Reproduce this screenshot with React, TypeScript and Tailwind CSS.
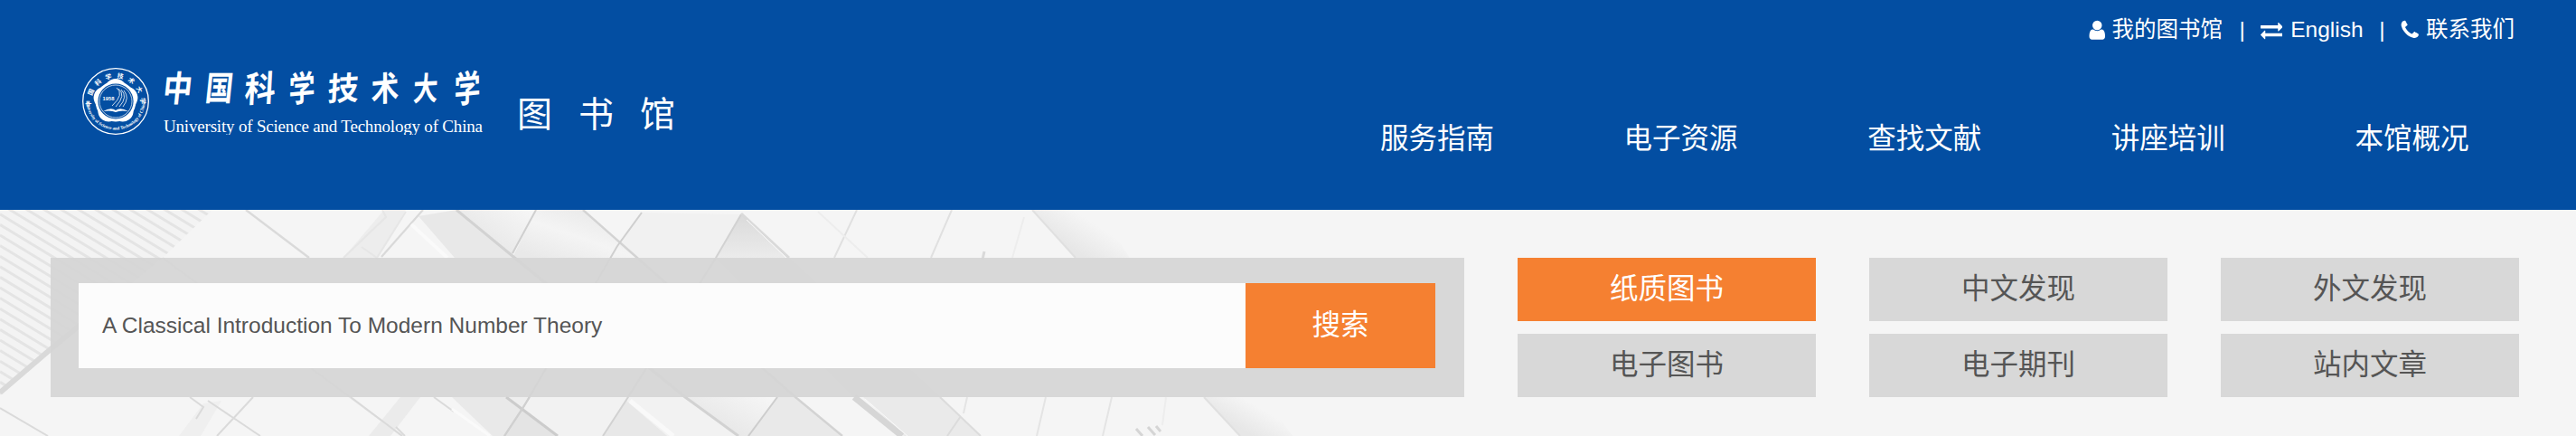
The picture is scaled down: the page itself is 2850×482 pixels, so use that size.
import React from "react";

const sans = "font-['Liberation_Sans','Noto_Sans_CJK_SC',sans-serif]";

const UserIcon = () => (
  <svg viewBox="0 0 1792 1792" className="h-[24.5px] w-[24.5px] -mx-[3px]" fill="currentColor">
    <path d="M1536 1399q0 109-62.5 187t-150.5 78h-854q-88 0-150.5-78t-62.5-187q0-85 8.5-160.5t31.5-152 58.5-131 94-89 134.5-34.5q131 128 313 128t313-128q76 0 134.5 34.5t94 89 58.5 131 31.5 152 8.5 160.5zm-256-887q0 159-112.5 271.5t-271.5 112.5-271.5-112.5-112.5-271.5 112.5-271.5 271.5-112.5 271.5 112.5 112.5 271.5z" />
  </svg>
);

const ExchangeIcon = () => (
  <svg viewBox="0 0 1792 1792" className="h-[24.5px] w-[24.5px]" fill="currentColor">
    <path d="M1792 1184v192q0 13-9.5 22.5t-22.5 9.5h-1376v192q0 13-9.5 22.5t-22.5 9.5q-12 0-24-10l-319-320q-9-9-9-22 0-14 9-23l320-320q9-9 23-9 13 0 22.5 9.5t9.5 22.5v192h1376q13 0 22.5 9.5t9.5 22.5zm0-544q0 14-9 23l-320 320q-9 9-23 9-13 0-22.5-9.5t-9.5-22.5v-192h-1376q-13 0-22.5-9.5t-9.5-22.5v-192q0-13 9.5-22.5t22.5-9.5h1376v-192q0-14 9-23t23-9q12 0 24 10l319 319q9 9 9 23z" />
  </svg>
);

const PhoneIcon = () => (
  <svg viewBox="0 0 1792 1792" className="h-[24.5px] w-[24.5px] -mx-[3px]" fill="currentColor">
    <path d="M1600 1240q0 27-10 70.5t-21 68.5q-21 50-122 106-94 51-186 51-27 0-53-3.5t-57.5-12.5-47-14.5-55.5-20.5-49-18q-98-35-175-83-127-79-264-216t-216-264q-48-77-83-175-3-9-18-49t-20.5-55.5-14.5-47-12.5-57.5-3.5-53q0-92 51-186 56-101 106-122 25-11 68.5-21t70.5-10q14 0 21 3 18 6 53 76 11 19 30 54t35 63.5 31 53.5q3 4 17.5 25t21.5 35.5 7 28.5q0 20-28.5 50t-62 55-62 53-28.5 46q0 9 5 22.5t8.5 20.5 14 24 11.5 19q76 137 174 235t235 174q2 1 19 11.5t24 14 20.5 8.5 22.5 5q18 0 46-28.5t53-62 55-62 50-28.5q14 0 28.5 7t35.5 21.5 25 17.5q25 15 53.5 31t63.5 35 54 30q70 35 76 53 3 7 3 21z" />
  </svg>
);

const Emblem = () => (
  <svg viewBox="-38 -38 76 76" className="h-[76px] w-[76px]" fill="#fff">
    <defs>
      <path id="arcTop" d="M-27 7 A27.5 27.5 0 1 1 27 7" />
      <path id="arcBottom" d="M-32.5 -1 A32.5 32.5 0 0 0 32.5 -1" />
    </defs>
    <circle r="36.3" fill="none" stroke="#fff" strokeWidth="1.3" />
    {[0, 72, 144, 216, 288].map((a) => (
      <circle key={a} r="12" cy="-13" transform={`rotate(${a})`} />
    ))}
    <circle r="22.5" />
    <circle r="19.6" fill="#034ea2" />
    <circle r="18" fill="none" stroke="#fff" strokeWidth="0.7" />
    <text className="font-['Liberation_Sans'] text-[5.8px] font-bold" x="-14.5" y="-1.5">1958</text>
    <path d="M-14 11 Q-5 6 0 10 Q5 6 14 11 Q5 9.5 0 12 Q-5 9.5 -14 11Z" />
    <path
      d="M3 -14 Q12 -7 0 6 M6 -13 Q14 -5 4 6 M9 -12 Q16 -4 8 6 M1 -15 Q10 -8 -4 5"
      fill="none"
      stroke="#fff"
      strokeWidth="0.8"
    />
    <text className="font-['Noto_Sans_CJK_SC'] text-[7px] font-bold">
      <textPath href="#arcTop" startOffset="1" textLength="92">中国科学技术大学</textPath>
    </text>
    <text className="font-['Liberation_Serif'] text-[5px] font-bold">
      <textPath href="#arcBottom" startOffset="2" textLength="98">
        University of Science and Technology of China
      </textPath>
    </text>
  </svg>
);

const Backdrop = () => (
  <svg
    viewBox="0 232 2850 250"
    preserveAspectRatio="none"
    className="absolute inset-0 h-full w-full"
    fill="none"
    stroke="#dadada"
    strokeWidth="2"
  >
    <defs>
      <clipPath id="stripeClip">
        <polygon points="0,232 235,232 180,285 56,388 0,437" />
      </clipPath>
      <linearGradient id="toDiagonal" x1="1" y1="0.1" x2="0" y2="0.9">
        <stop offset="0" stopColor="#f6f6f6" />
        <stop offset="1" stopColor="#e2e2e2" />
      </linearGradient>
      <linearGradient id="fromDiagonal" x1="0" y1="1" x2="0.9" y2="0">
        <stop offset="0.1" stopColor="#e9e9e9" />
        <stop offset="0.5" stopColor="#f4f4f4" />
        <stop offset="1" stopColor="#e6e6e6" />
      </linearGradient>
      <linearGradient id="soft" gradientUnits="objectBoundingBox" x1="0.25" y1="0.6" x2="0.65" y2="0.3">
        <stop offset="0" stopColor="#e7e7e7" />
        <stop offset="1" stopColor="#f5f5f5" />
      </linearGradient>
      <linearGradient id="triangle" x1="0" y1="0" x2="0" y2="1">
        <stop offset="0" stopColor="#dadada" />
        <stop offset="1" stopColor="#ebebeb" />
      </linearGradient>
    </defs>

    <g clipPath="url(#stripeClip)">
      <rect x="0" y="232" width="240" height="210" fill="#f3f3f3" stroke="none" />
      {Array.from({ length: 32 }, (_, i) => (
        <line key={i} x1="0" y1={86 + i * 11.6} x2="240" y2={232 + i * 11.6} stroke="#e4e4e4" strokeWidth="3" />
      ))}
    </g>
    <path d="M0 434 L56 386 L130 325" stroke="#d9d9d9" strokeWidth="6" />
    <path d="M0 451 L53 482" />
    <path d="M272 232 L342 285" strokeWidth="2.4" />
    <path d="M180 285 L445 482" stroke="#e6e6e6" />

    <g stroke="none">
      <polygon points="425,232 449,232 417,285 380,285" fill="#ededed" />
      <polygon points="463,239 505,232 568,285 503,285" fill="#e8e8e8" />
      <polygon points="505,232 593,232 567,282" fill="url(#toDiagonal)" />
      <polygon points="593,232 645,232 705,285 567,285" fill="url(#fromDiagonal)" />
      <polygon points="710,235 820,237 792,285 705,285 685,272" fill="#f1f1f1" />
      <polygon points="820,237 873,285 792,285" fill="url(#triangle)" />
      <polygon points="1142,232 1215,232 1250,285 1190,285" fill="url(#soft)" />
      <polygon points="568,285 705,285 880,439 758,439" fill="#ededed" />
      <polygon points="792,285 873,285 1040,439 945,439" fill="#eaeaea" />
      <polygon points="225,446 245,443 222,482 198,482" fill="#efefef" />
      <polygon points="443,439 465,439 432,482 408,482" fill="#ebebeb" />
      <polygon points="500,439 560,439 617,482 545,482" fill="#e9e9e9" />
      <polygon points="586,439 758,439 817,482 617,482 577,452" fill="#f2f2f2" />
      <polygon points="560,439 586,439 577,452" fill="#eeeeee" />
      <polygon points="577,452 617,482 558,482" fill="#e4e4e4" />
      <polygon points="693,443 738,482 667,482" fill="#e8e8e8" />
      <polygon points="758,439 860,439 828,482 817,482" fill="url(#toDiagonal)" />
      <polygon points="860,439 880,439 932,482 828,482" fill="#e9e9e9" />
      <polygon points="955,439 1040,439 1085,482 1000,482" fill="#eaeaea" />
      <polygon points="1332,439 1400,439 1430,482 1372,482" fill="url(#soft)" />
    </g>

    <path d="M423 232 L427 240 L380 285 M449 234 L417 285 L400 273" stroke="#e6e6e6" />
    <path d="M468 232 L422 284" stroke="#d9d9d9" strokeWidth="2.2" />
    <path d="M455 248 L495 285" stroke="#fafafa" strokeWidth="4" />
    <path d="M505 232 L567 283 L758 439 L817 482" stroke="#d2d2d2" strokeWidth="3" />
    <path d="M593 232 L567 280" stroke="#cfcfcf" />
    <path d="M645 232 L705 285 L880 439 L932 482" stroke="#d3d3d3" strokeWidth="2.4" />
    <path d="M710 235 L683 272 L578 452 L558 482" stroke="#cfcfcf" />
    <path d="M820 237 L792 285 L693 442 L667 482" stroke="#d2d2d2" />
    <path d="M820 236 L873 285" stroke="#dadada" strokeWidth="3" />
    <path d="M826 243 L870 285" stroke="#fbfbfb" strokeWidth="1" />
    <path d="M948 232 L923 285 M1053 232 L1030 285" stroke="#e0e0e0" />
    <path d="M1133 240 L1120 285 M905 234 L960 285" stroke="#ededed" />
    <path d="M1142 232 L1190 285" stroke="#e0e0e0" />
    <path d="M1089 278 L1087 287" stroke="#d9d9d9" strokeWidth="3" />
    <path d="M1095 315 L1115 345 L1135 397 M1130 320 L1148 340 L1140 370" stroke="#e4e4e4" strokeWidth="4" />

    <path d="M210 439 L225 450 L217 463 M230 443 L288 482" />
    <path d="M280 439 L240 482" />
    <path d="M388 439 L445 482 M480 439 L502 455 M438 472 L448 482" />
    <path d="M500 452 L542 482" stroke="#fafafa" strokeWidth="3" />
    <path d="M560 439 L617 482" stroke="#cccccc" strokeWidth="3" />
    <path d="M586 439 L558 482" stroke="#d0d0d0" />
    <path d="M697 443 L745 482" stroke="#f9f9f9" strokeWidth="5" />
    <path d="M860 439 L828 482" stroke="#cdcdcd" />
    <path d="M945 439 L998 482" stroke="#d6d6d6" strokeWidth="7" />
    <path d="M957 441 L1004 482" stroke="#fafafa" strokeWidth="1" />
    <path d="M1040 439 L1085 482 M1063 460 L1048 482" stroke="#dcdcdc" />
    <path d="M1070 439 L1066 457 M1157 439 L1147 482 M1230 439 L1220 482" stroke="#e4e4e4" />
    <path d="M1290 439 L1286 470" stroke="#ededed" />
    <path d="M1332 439 L1372 482" stroke="#e0e0e0" />
    <path d="M1257 474 L1264 482 M1270 472 L1278 481 M1279 471 L1284 477" stroke="#d5d5d5" strokeWidth="3" />
  </svg>
);

const nameGlyphs = [
  { c: "中", cls: "scale-y-115 scale-x-95" },
  { c: "国", cls: "scale-x-90 scale-y-110" },
  { c: "科", cls: "scale-y-115 -rotate-3" },
  { c: "学", cls: "scale-x-85 scale-y-115 -rotate-6" },
  { c: "技", cls: "scale-y-105 -rotate-3" },
  { c: "术", cls: "scale-x-90 scale-y-110 -rotate-6" },
  { c: "大", cls: "scale-x-80 scale-y-105 -rotate-3" },
  { c: "学", cls: "scale-x-85 scale-y-120 -rotate-6" },
];

const navItems = ["服务指南", "电子资源", "查找文献", "讲座培训", "本馆概况"];
const tabs = ["纸质图书", "中文发现", "外文发现", "电子图书", "电子期刊", "站内文章"];

export default function App() {
  return (
    <div className={`h-[482px] w-[2850px] overflow-hidden bg-[#f5f5f5] ${sans}`}>
      <header className="flex h-[232px] justify-between bg-[#034ea2] text-white">
        <div className="flex pl-[90px] pt-[74px]">
          <Emblem />
          <div className="ml-[14px] w-[356px]">
            <div className="-mt-[4px] flex h-[51px] w-[354px] -skew-x-6 items-center justify-between font-['Noto_Sans_CJK_SC',sans-serif] text-[34px] font-bold leading-none">
              {nameGlyphs.map(({ c, cls }, i) => (
                <span key={i} className={`inline-block ${cls}`}>
                  {c}
                </span>
              ))}
            </div>
            <svg className="h-[28px] w-[356px]" viewBox="0 0 356 28" fill="#fff">
              <text x="1" y="25" textLength="353" className="font-['Liberation_Serif',serif] text-[19px]">
                University of Science and Technology of China
              </text>
            </svg>
          </div>
          <h1 className="ml-[36px] mt-[24px] h-[58px] text-[39px] leading-[58px] tracking-[29px]">图书馆</h1>
        </div>
        <div className="w-[1361px]">
          <div className="flex h-[66px] items-center justify-end pr-[68px] text-[24.5px] leading-none">
            <a className="flex items-center gap-[7px]">
              <UserIcon />
              我的图书馆
            </a>
            <span className="ml-[18.5px] mr-[17px]">|</span>
            <a className="flex items-center gap-[9px]">
              <ExchangeIcon />
              English
            </a>
            <span className="ml-[17.5px] mr-[18.5px]">|</span>
            <a className="flex items-center gap-[8.5px]">
              <PhoneIcon />
              联系我们
            </a>
          </div>
          <nav className="mt-[57px] grid w-[1348px] grid-cols-5 text-[31.5px] leading-[60px]">
            {navItems.map((t) => (
              <a key={t} className="pl-[38px]">
                {t}
              </a>
            ))}
          </nav>
        </div>
      </header>

      <main className="relative h-[250px]">
        <Backdrop />
        <div className="relative flex pl-[56px] pt-[53px]">
          <form className="h-[154px] w-[1564px] bg-[#d5d5d5]/92 pl-[31px] pr-[32px] pt-[28px]">
            <div className="flex h-[94px]">
              <div className="flex flex-1 items-center bg-white/92 pl-[26px] text-[24.5px] text-[#555]">
                A Classical Introduction To Modern Number Theory
              </div>
              <button type="button" className="w-[210px] bg-[#f58031] text-[31.5px] text-white">
                搜索
              </button>
            </div>
          </form>
          <div className="ml-[59px] grid h-[154px] grid-cols-[330px_330px_330px] grid-rows-[70px_70px] gap-x-[59px] gap-y-[14px] text-[31.5px]">
            {tabs.map((t, i) => (
              <button
                key={t}
                type="button"
                className={i === 0 ? "bg-[#f58031] text-white" : "bg-[#d8d8d8] text-[#555]"}
              >
                {t}
              </button>
            ))}
          </div>
        </div>
      </main>
    </div>
  );
}
